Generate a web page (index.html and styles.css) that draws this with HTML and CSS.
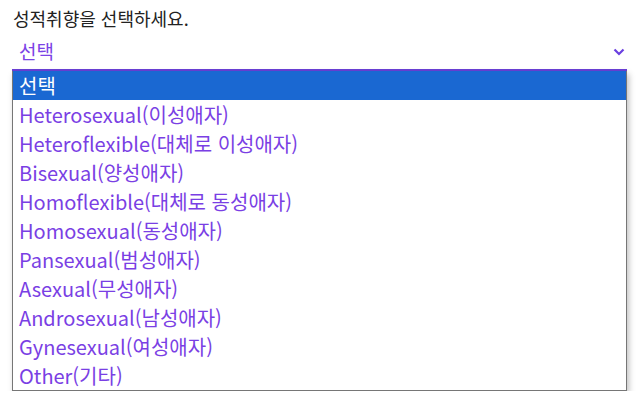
FILE: index.html
```html
<!DOCTYPE html>
<html lang="ko">
<head>
<meta charset="utf-8">
<link rel="stylesheet" href="styles.css">
</head>
<body>
<div class="field">
  <div class="label">성적취향을 선택하세요.</div>
  <div class="select">
    <span class="value">선택</span>
    <svg class="chev" width="12" height="8" viewBox="0 0 12 8"><path d="M1.5 1.5 L6 6 L10.5 1.5" fill="none" stroke="#6a3fe0" stroke-width="2.2"/></svg>
  </div>
  <ul class="menu">
    <li class="opt active">선택</li>
    <li class="opt">Heterosexual(이성애자)</li>
    <li class="opt">Heteroflexible(대체로 이성애자)</li>
    <li class="opt">Bisexual(양성애자)</li>
    <li class="opt">Homoflexible(대체로 동성애자)</li>
    <li class="opt">Homosexual(동성애자)</li>
    <li class="opt">Pansexual(범성애자)</li>
    <li class="opt">Asexual(무성애자)</li>
    <li class="opt">Androsexual(남성애자)</li>
    <li class="opt">Gynesexual(여성애자)</li>
    <li class="opt">Other(기타)</li>
  </ul>
</div>
</body>
</html>
```
FILE: styles.css
```css
html, body { margin: 0; padding: 0; background: #fff; }
body { font-family: "Noto Sans CJK KR", "Noto Sans", sans-serif; }
.field { padding: 6px 12px 0 12px; width: 615px; }
.label { font-size: 18px; line-height: 25px; color: #222; padding-left: 1px; }
.select {
  display: flex; align-items: center; justify-content: space-between;
  height: 40px; border-bottom: 2px solid #6a3fd6; box-sizing: border-box;
  padding: 0 2px 0 7px;
}
.value { font-size: 19px; color: #7b42e6; }
.chev { margin-top: 4px; }
.menu {
  list-style: none; margin: 0; padding: 0;
  border: 1px solid #767676; border-top: none;
  box-shadow: 2px 3px 6px rgba(0,0,0,0.25);
}
.opt { height: 29px; line-height: 29px; padding-left: 6px; font-size: 20px; color: #7a3fe4; }
.opt.active { background: #1a68d2; color: #fff; }
```
